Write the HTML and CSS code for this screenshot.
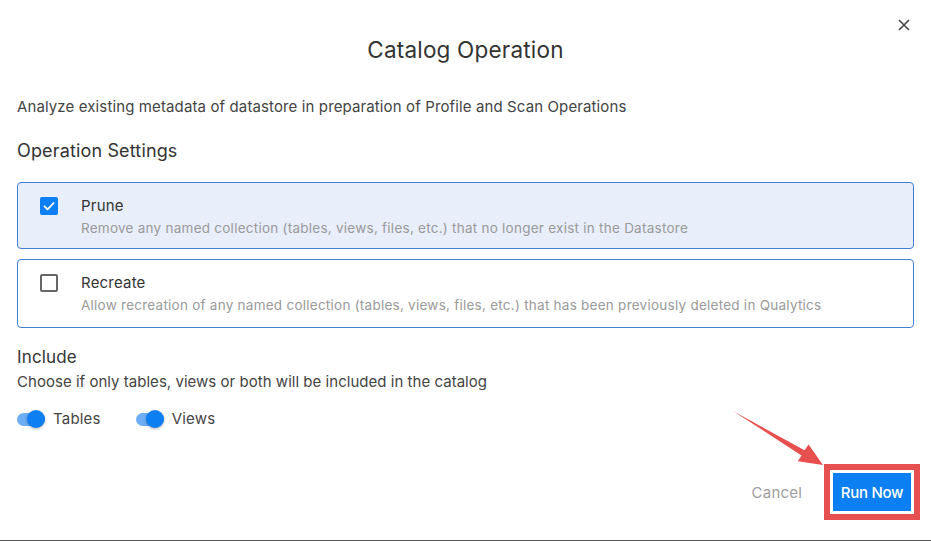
FILE: index.html
```html
<!DOCTYPE html>
<html>
<head>
<meta charset="utf-8">
<link rel="stylesheet" href="styles.css">
</head>
<body>
<div class="dialog">
  <button class="close" aria-label="Close">
    <svg width="12" height="12" viewBox="0 0 12 12"><path d="M1 1L11 11M11 1L1 11" stroke="#444" stroke-width="1.6" fill="none"/></svg>
  </button>
  <h1 class="title">Catalog Operation</h1>
  <p class="desc">Analyze existing metadata of datastore in preparation of Profile and Scan Operations</p>
  <h2 class="section">Operation Settings</h2>
  <div class="options">
    <label class="option option-checked">
      <span class="checkbox checked">
        <svg width="18" height="18" viewBox="0 0 18 18"><path d="M4.5 9.3L7.6 12.3L13.6 6" stroke="#fff" stroke-width="1.8" fill="none" stroke-linecap="round" stroke-linejoin="round"/></svg>
      </span>
      <span class="option-text">
        <span class="option-title">Prune</span>
        <span class="option-sub">Remove any named collection (tables, views, files, etc.) that no longer exist in the Datastore</span>
      </span>
    </label>
    <label class="option">
      <span class="checkbox"></span>
      <span class="option-text">
        <span class="option-title">Recreate</span>
        <span class="option-sub">Allow recreation of any named collection (tables, views, files, etc.) that has been previously deleted in Qualytics</span>
      </span>
    </label>
  </div>
  <h2 class="section include">Include</h2>
  <p class="desc small-gap">Choose if only tables, views or both will be included in the catalog</p>
  <div class="toggles">
    <span class="toggle"><span class="track"><span class="knob"></span></span><span class="toggle-label">Tables</span></span>
    <span class="toggle"><span class="track"><span class="knob"></span></span><span class="toggle-label">Views</span></span>
  </div>
  <div class="footer">
    <button class="cancel">Cancel</button>
    <button class="run">Run Now</button>
  </div>
  <svg class="arrow" width="931" height="541" viewBox="0 0 931 541">
    <polygon points="733,411 804.5,450.2 808.6,444.5 823,465 797.8,461.3 801.5,455.4" fill="#e8504f"/>
  </svg>
</div>
</body>
</html>
```

FILE: styles.css
```css
* { box-sizing: border-box; }
html, body { margin: 0; padding: 0; background: #fff; }
body { font-family: Inter, "Noto Sans", sans-serif; color: #333; }

.dialog {
  position: relative;
  width: 931px;
  height: 541px;
  padding: 35px 17px 0 17px;
  border-bottom: 1px solid #5a5a5a;
  overflow: hidden;
}

.close {
  position: absolute;
  top: 18px;
  right: 20px;
  width: 14px;
  height: 14px;
  padding: 0;
  border: 0;
  background: none;
  display: flex;
  align-items: center;
  justify-content: center;
}

.title {
  margin: 0;
  text-align: center;
  font-size: 22.5px;
  line-height: 30px;
  font-weight: 400;
  color: #333;
  letter-spacing: 0.2px;
}

.desc {
  margin: 32px 0 0 0;
  font-size: 15px;
  line-height: 20px;
  color: #444;
  letter-spacing: 0.12px;
}
.desc.small-gap { margin-top: 3px; letter-spacing: 0.03px; }

.section {
  margin: 22px 0 0 0;
  font-size: 18px;
  line-height: 24px;
  font-weight: 400;
  color: #333;
  letter-spacing: 0.15px;
}
.section.include { margin-top: 17px; font-size: 17px; }

.options {
  margin-top: 19px;
  display: flex;
  flex-direction: column;
  gap: 10px;
}

.option {
  display: flex;
  align-items: flex-start;
  height: 67px;
  padding: 13px 10px 0 22px;
  border: 1px solid #3f7fd6;
  border-radius: 4px;
  background: #fff;
}
.option + .option { height: 69px; }
.option-checked { background: #e8eefa; }

.checkbox {
  flex: none;
  width: 18px;
  height: 18px;
  margin-top: 1px;
  border: 2px solid #666;
  border-radius: 2px;
  display: flex;
  align-items: center;
  justify-content: center;
}
.checkbox.checked {
  border: 0;
  background: #0c7ff2;
}

.option-text {
  display: flex;
  flex-direction: column;
  margin-left: 23px;
}
.option-title {
  font-size: 15px;
  line-height: 20px;
  color: #333;
  letter-spacing: 0.2px;
}
.option-sub {
  margin-top: 3px;
  font-size: 13.5px;
  line-height: 18px;
  color: #9a9a9a;
  letter-spacing: 0.25px;
}

.toggles {
  margin-top: 17px;
  display: flex;
  align-items: center;
  gap: 35px;
  height: 20px;
}
.toggle {
  display: flex;
  align-items: center;
}
.track {
  position: relative;
  width: 28px;
  height: 13px;
  border-radius: 7px;
  background: #6daef5;
}
.knob {
  position: absolute;
  right: 0;
  top: -2.5px;
  width: 18px;
  height: 18px;
  border-radius: 50%;
  background: #0c7ff2;
  box-shadow: 0 1px 3px rgba(0,0,0,0.3);
}
.toggle-label {
  margin-left: 8px;
  font-size: 15px;
  line-height: 20px;
  color: #444;
  letter-spacing: 0.2px;
}

.footer {
  margin-top: 44px;
  display: flex;
  justify-content: flex-end;
  align-items: center;
  gap: 31px;
  padding-right: 3px;
}
.cancel {
  border: 0;
  background: none;
  padding: 0;
  font-family: inherit;
  font-size: 15px;
  color: #9e9e9e;
  letter-spacing: 0.2px;
}
.run {
  width: 78px;
  height: 38px;
  border: 0;
  padding: 0;
  background: #0c7ff2;
  color: #fff;
  font-family: inherit;
  font-size: 15px;
  font-weight: 500;
  letter-spacing: -0.3px;
  box-shadow: 0 0 0 3px #fff, 0 0 0 9px #e8504f;
}

.arrow {
  position: absolute;
  left: 0;
  top: 0;
  pointer-events: none;
}
```
